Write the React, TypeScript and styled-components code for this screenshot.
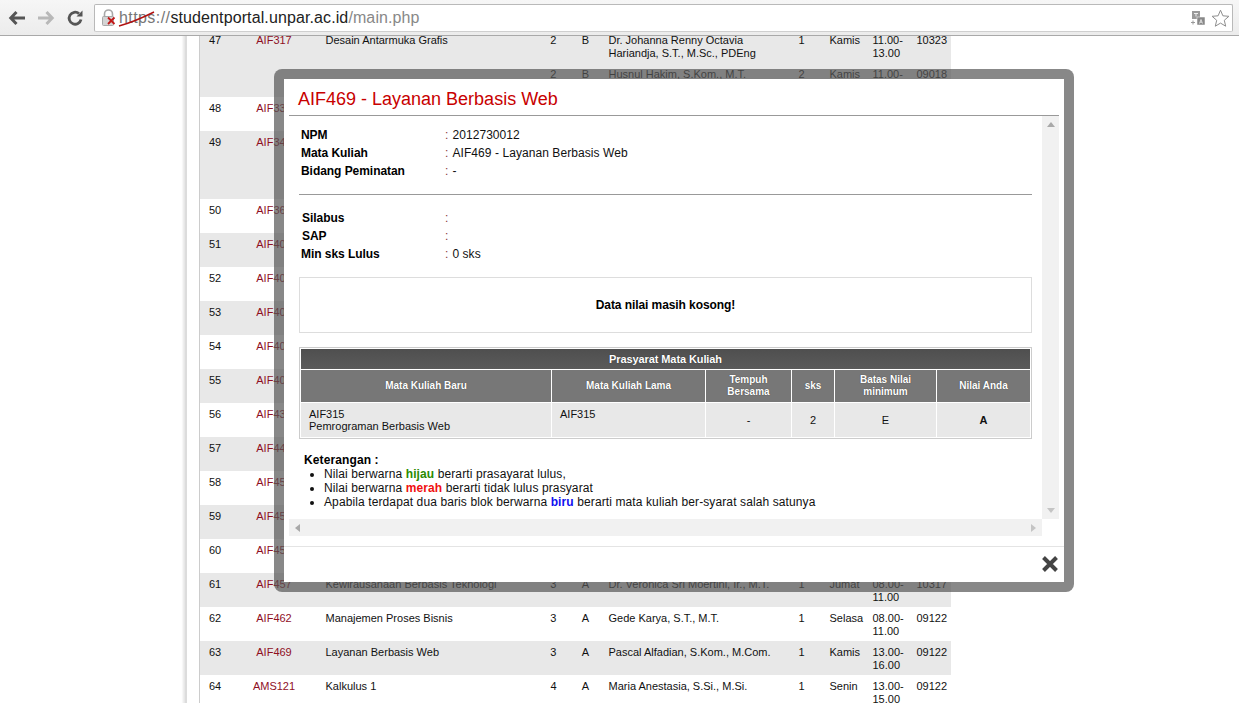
import React from 'react';
import styled, { createGlobalStyle } from 'styled-components';

const Global = createGlobalStyle`
  html, body {
    margin: 0;
    background: #fff;
    overflow: hidden;
    font-family: "Liberation Sans", Arial, sans-serif;
  }
`;

const Screen = styled.div`
  width: 1239px;
  height: 703px;
  display: flex;
  flex-direction: column;
  overflow: hidden;
`;

const Toolbar = styled.header`
  flex: none;
  height: 36px;
  display: flex;
  align-items: flex-start;
  padding: 4px 6px 0 0;
  box-sizing: border-box;
  background: linear-gradient(#f6f6f6, #ececec);
  border-bottom: 1px solid #a9a9a9;
`;

const NavIcon = styled.svg<{ $left: number }>`
  flex: none;
  width: 18px;
  height: 18px;
  margin: 5px 0 0 ${(p) => p.$left}px;
`;

const UrlBar = styled.div`
  flex: 1;
  height: 28px;
  margin-left: 10px;
  display: flex;
  align-items: center;
  box-sizing: border-box;
  background: #fff;
  border: 1px solid #b9b9b9;
  border-bottom-color: #cfcfcf;
  border-radius: 2px;
  padding: 0 2px 0 6px;
`;

const UrlText = styled.div`
  position: relative;
  margin-left: 2px;
  font-size: 16px;
  letter-spacing: 0.11px;
  color: #222;
  white-space: nowrap;
`;

const Scheme = styled.span`
  color: #777;
  letter-spacing: 0.42px;
`;

const Path = styled.span`
  color: #888;
`;

const Strike = styled.svg`
  position: absolute;
  left: -1px;
  top: -2px;
  width: 38px;
  height: 22px;
`;

const BarEnd = styled.div`
  margin-left: auto;
  display: flex;
  align-items: center;
  gap: 5px;
`;

const Content = styled.main`
  position: relative;
  flex: 1;
  min-height: 0;
  overflow: hidden;
`;

const Sheet = styled.div`
  width: 751px;
  margin-left: 185px;
  padding-left: 12px;
  border-left: 2px solid #dcdcdc;
  box-shadow: -2px 0 2px #e6e6e6;
`;

const Table = styled.table`
  width: 751px;
  margin-top: -7px;
  table-layout: fixed;
  border-collapse: collapse;
  border-left: 1px solid #ccc;
  font-size: 11px;
  line-height: 13px;
  color: #111;
`;

const Row = styled.tr<{ $shade: boolean }>`
  background: ${(p) => (p.$shade ? '#e8e8e8' : '#fff')};
`;

const Cell = styled.td<{ $center?: boolean }>`
  height: 26px;
  padding: 5px 0 3px ${(p) => (p.$center ? 0 : 9)}px;
  text-align: ${(p) => (p.$center ? 'center' : 'left')};
  vertical-align: top;
  white-space: pre-line;
`;

const CodeLink = styled.span`
  color: #8f0f1f;
`;

const Modal = styled.section`
  position: absolute;
  left: 274px;
  top: 33px;
  width: 780px;
  height: 503px;
  display: flex;
  flex-direction: column;
  background: #fff;
  background-clip: padding-box;
  border: 10px solid rgba(85, 85, 85, 0.7);
  border-radius: 8px;
`;

const ModalTitle = styled.h2`
  flex: none;
  height: 37px;
  box-sizing: border-box;
  margin: 0 5px;
  padding: 10px 9px 0;
  font-size: 18px;
  line-height: 21px;
  font-weight: normal;
  color: #c80000;
  border-bottom: 1px solid #999;
`;

const ScrollArea = styled.div`
  flex: none;
  height: 420px;
  margin: 0 5px;
  display: grid;
  grid-template-columns: 753px 17px;
  grid-template-rows: 403px 17px;
`;

const Panel = styled.div`
  padding: 10px 10px 0;
  box-sizing: border-box;
  overflow: hidden;
  font-size: 12px;
  color: #111;
`;

const InfoList = styled.div`
  display: grid;
  grid-template-columns: 144px 1fr;
  grid-auto-rows: 18px;
  line-height: 18px;
  padding-left: 2px;
`;

const InfoLabel = styled.div<{ $nudge?: boolean }>`
  font-weight: bold;
  color: #000;
  letter-spacing: -0.05px;
  padding-left: ${(p) => (p.$nudge ? 1 : 0)}px;
`;

const InfoValue = styled.div`
  letter-spacing: 0.07px;
  &::before {
    content: ':';
    color: #8a3a3a;
    margin-right: 4px;
  }
`;

const Rule = styled.hr`
  height: 1px;
  margin: 14px 0 14px;
  border: 0;
  background: #999;
`;

const EmptyBox = styled.div`
  height: 56px;
  margin-top: 14px;
  box-sizing: border-box;
  display: flex;
  align-items: center;
  justify-content: center;
  border: 1px solid #ddd;
  font-weight: bold;
  letter-spacing: -0.08px;
  color: #000;
`;

const PrereqTable = styled.table`
  width: 733px;
  margin-top: 14px;
  table-layout: fixed;
  border: 1px solid #ccc;
  border-spacing: 1px;
  border-collapse: separate;
  font-size: 11px;
  line-height: 12px;
`;

const PrereqTitle = styled.th`
  height: 20px;
  padding: 0;
  background: linear-gradient(#4f4f4f, #5a5a5a);
  color: #fff;
  font-weight: bold;
  letter-spacing: -0.1px;
  text-shadow: 0 0 1px #222;
`;

const PrereqHead = styled.th`
  height: 32px;
  padding: 0;
  background: #777;
  color: #fff;
  font-size: 10px;
  font-weight: bold;
  text-shadow: 0 0 1px #333;
`;

const PrereqCell = styled.td<{ $text?: boolean; $strong?: boolean }>`
  height: 24px;
  padding: 5px ${(p) => (p.$text ? '8px' : '0')};
  background: #e8e8e8;
  color: #111;
  text-align: ${(p) => (p.$text ? 'left' : 'center')};
  vertical-align: ${(p) => (p.$text ? 'top' : 'middle')};
  font-weight: ${(p) => (p.$strong ? 'bold' : 'normal')};
`;

const Notes = styled.div`
  margin: 14px 0 0 5px;
  line-height: 14px;
  letter-spacing: 0.11px;
`;

const NotesTitle = styled.div`
  font-weight: bold;
  color: #000;
`;

const NotesList = styled.ul`
  margin: 0;
  padding-left: 20px;
`;

const Tone = styled.b<{ $color: string }>`
  color: ${(p) => p.$color};
`;

const ScrollTrack = styled.div<{ $vertical?: boolean }>`
  display: flex;
  flex-direction: ${(p) => (p.$vertical ? 'column' : 'row')};
  align-items: center;
  justify-content: space-between;
  padding: ${(p) => (p.$vertical ? '6px 0' : '0 6px')};
  box-sizing: border-box;
  background: #f1f1f1;
`;

const Arrow = styled.i<{ $dir: 'up' | 'down' | 'left' | 'right' }>`
  display: block;
  width: 0;
  height: 0;
  border: 4px solid transparent;
  ${(p) =>
    p.$dir === 'up'
      ? 'border-top: 0; border-bottom: 5px solid #a9a9a9;'
      : p.$dir === 'down'
        ? 'border-bottom: 0; border-top: 5px solid #c4c4c4;'
        : p.$dir === 'left'
          ? 'border-left: 0; border-right: 5px solid #a9a9a9;'
          : 'border-right: 0; border-left: 5px solid #c4c4c4;'}
`;

const Footer = styled.footer`
  flex: none;
  margin-top: 10px;
  height: 36px;
  box-sizing: border-box;
  display: flex;
  justify-content: flex-end;
  padding: 8px 5px 0 0;
  border-top: 1px solid #e4e4e4;
`;

const CloseIcon = styled.svg`
  width: 18px;
  height: 18px;
`;

type Course = {
  no: number;
  code: string;
  name: string;
  sks: string;
  cls: string;
  lecturer: string;
  credit: string;
  day: string;
  time: string;
  room: string;
  span?: boolean;
};

const courses: Course[] = [
  { no: 48, code: 'AIF331', name: 'Pemodelan Sistem', sks: '3', cls: 'A', lecturer: 'Husnul Hakim, S.Kom., M.T.', credit: '1', day: 'Senin', time: '08.00-\n11.00', room: '09018' },
  { no: 49, code: 'AIF342', name: 'Analisis Sistem', sks: '3', cls: 'A', lecturer: 'Gede Karya, S.T., M.T.', credit: '1', day: 'Rabu', time: '08.00-\n11.00', room: '09122', span: true },
  { no: 50, code: 'AIF361', name: 'Jaringan Komputer', sks: '3', cls: 'A', lecturer: 'Pascal Alfadian, S.Kom.', credit: '1', day: 'Senin', time: '13.00-\n16.00', room: '09122' },
  { no: 51, code: 'AIF401', name: 'Kecerdasan Buatan', sks: '3', cls: 'A', lecturer: 'Gede Karya, S.T., M.T.', credit: '1', day: 'Selasa', time: '13.00-\n16.00', room: '09122' },
  { no: 52, code: 'AIF402', name: 'Grafika Komputer', sks: '3', cls: 'A', lecturer: 'Pascal Alfadian, S.Kom.', credit: '1', day: 'Rabu', time: '13.00-\n16.00', room: '09122' },
  { no: 53, code: 'AIF403', name: 'Sistem Terdistribusi', sks: '3', cls: 'A', lecturer: 'Husnul Hakim, S.Kom., M.T.', credit: '1', day: 'Kamis', time: '08.00-\n11.00', room: '09018' },
  { no: 54, code: 'AIF404', name: 'Keamanan Informasi', sks: '3', cls: 'A', lecturer: 'Gede Karya, S.T., M.T.', credit: '1', day: 'Jumat', time: '08.00-\n11.00', room: '09122' },
  { no: 55, code: 'AIF405', name: 'Basis Data Lanjut', sks: '3', cls: 'A', lecturer: 'Pascal Alfadian, S.Kom.', credit: '1', day: 'Senin', time: '08.00-\n11.00', room: '09122' },
  { no: 56, code: 'AIF431', name: 'Rekayasa Perangkat Lunak', sks: '3', cls: 'A', lecturer: 'Husnul Hakim, S.Kom., M.T.', credit: '1', day: 'Selasa', time: '08.00-\n11.00', room: '09018' },
  { no: 57, code: 'AIF441', name: 'Komputasi Awan', sks: '3', cls: 'A', lecturer: 'Gede Karya, S.T., M.T.', credit: '1', day: 'Rabu', time: '08.00-\n11.00', room: '09122' },
  { no: 58, code: 'AIF451', name: 'Pemrograman Mobile', sks: '3', cls: 'A', lecturer: 'Pascal Alfadian, S.Kom.', credit: '1', day: 'Kamis', time: '08.00-\n11.00', room: '09122' },
  { no: 59, code: 'AIF452', name: 'Data Mining', sks: '3', cls: 'A', lecturer: 'Husnul Hakim, S.Kom., M.T.', credit: '1', day: 'Jumat', time: '13.00-\n16.00', room: '09018' },
  { no: 60, code: 'AIF455', name: 'Topik Khusus', sks: '3', cls: 'A', lecturer: 'Gede Karya, S.T., M.T.', credit: '1', day: 'Senin', time: '13.00-\n16.00', room: '09122' },
  { no: 61, code: 'AIF457', name: 'Kewirausahaan Berbasis Teknologi', sks: '3', cls: 'A', lecturer: 'Dr. Veronica Sri Moertini, Ir., M.T.', credit: '1', day: 'Jumat', time: '08.00-\n11.00', room: '10317' },
  { no: 62, code: 'AIF462', name: 'Manajemen Proses Bisnis', sks: '3', cls: 'A', lecturer: 'Gede Karya, S.T., M.T.', credit: '1', day: 'Selasa', time: '08.00-\n11.00', room: '09122' },
  { no: 63, code: 'AIF469', name: 'Layanan Berbasis Web', sks: '3', cls: 'A', lecturer: 'Pascal Alfadian, S.Kom., M.Com.', credit: '1', day: 'Kamis', time: '13.00-\n16.00', room: '09122' },
  { no: 64, code: 'AMS121', name: 'Kalkulus 1', sks: '4', cls: 'A', lecturer: 'Maria Anestasia, S.Si., M.Si.', credit: '1', day: 'Senin', time: '13.00-\n15.00', room: '09122' },
];

const columnWidths = [32, 85, 219, 36, 28, 183, 38, 43, 44, 43];
const prereqWidths = [250, 153, 85, 42, 101, 93];

const CourseCells = ({ c }: { c: Course }) => (
  <>
    <Cell $center>{c.sks}</Cell>
    <Cell $center>{c.cls}</Cell>
    <Cell>{c.lecturer}</Cell>
    <Cell $center>{c.credit}</Cell>
    <Cell>{c.day}</Cell>
    <Cell>{c.time}</Cell>
    <Cell>{c.room}</Cell>
  </>
);

const CourseRow = ({ c }: { c: Course }) => {
  const shade = c.no % 2 === 1;
  const span = c.span ? 2 : 1;
  return (
    <>
      <Row $shade={shade}>
        <Cell rowSpan={span}>{c.no}</Cell>
        <Cell $center rowSpan={span}>
          <CodeLink>{c.code}</CodeLink>
        </Cell>
        <Cell rowSpan={span}>{c.name}</Cell>
        <CourseCells c={c} />
      </Row>
      {c.span && (
        <Row $shade={shade}>
          <CourseCells c={{ ...c, day: 'Kamis' }} />
        </Row>
      )}
    </>
  );
};

const BackIcon = () => (
  <NavIcon $left={8} viewBox="0 0 18 18">
    <path d="M8.5 3 2.8 9l5.7 6M3.5 9H17" fill="none" stroke="#555" strokeWidth="3" />
  </NavIcon>
);

const ForwardIcon = () => (
  <NavIcon $left={11} viewBox="0 0 18 18">
    <path d="M9.5 3l5.7 6-5.7 6M14.5 9H1" fill="none" stroke="#b8b8b8" strokeWidth="3" />
  </NavIcon>
);

const ReloadIcon = () => (
  <NavIcon $left={11} viewBox="0 0 18 18">
    <path d="M15 10.5A6 6 0 1 1 13 4.6" fill="none" stroke="#555" strokeWidth="2.8" />
    <path d="M10.5 7.5H16.5V1.5z" fill="#555" />
  </NavIcon>
);

const BrokenLock = () => (
  <svg width="16" height="18" viewBox="0 0 16 18">
    <path d="M3.5 8V5a4 4 0 0 1 8 0v3" fill="none" stroke="#a8a8a8" strokeWidth="1.6" />
    <rect x="1.5" y="7.5" width="11" height="9" rx="1" fill="#d4d4d4" stroke="#a8a8a8" />
    <path d="M7 8.5l6.5 6.5M13.5 8.5L7 15" stroke="#c21818" strokeWidth="1.8" />
  </svg>
);

const TranslateIcon = () => (
  <svg width="15" height="15" viewBox="0 0 15 15">
    <rect x="1" y="0" width="8" height="8" fill="#999" />
    <rect x="6" y="6" width="8" height="8" fill="#888" stroke="#fff" strokeWidth="0.5" />
    <path d="M3 2.5h4M5 2.5v3" stroke="#eee" strokeWidth="1" fill="none" />
    <path d="M8.5 12.5l1.5-4 1.5 4M9 11.2h2" stroke="#eee" strokeWidth="0.8" fill="none" />
    <path d="M0 11.5h4M2 9.5v4" stroke="#999" strokeWidth="1" />
  </svg>
);

const StarIcon = () => (
  <svg width="19" height="19" viewBox="0 0 19 19">
    <path
      d="M9.5 1.2l2.4 5.6 6 .5-4.6 4 1.4 5.9-5.2-3.1-5.2 3.1 1.4-5.9-4.6-4 6-.5z"
      fill="#fff"
      stroke="#8e8e8e"
      strokeWidth="1"
    />
  </svg>
);

export default function App() {
  const first = { sks: '2', cls: 'B', credit: '1', day: 'Kamis', room: '10323' };
  return (
    <Screen>
      <Global />
      <Toolbar>
        <BackIcon />
        <ForwardIcon />
        <ReloadIcon />
        <UrlBar>
          <BrokenLock />
          <UrlText>
            <Scheme>https://</Scheme>
            studentportal.unpar.ac.id
            <Path>/main.php</Path>
            <Strike viewBox="0 0 38 22">
              <path d="M1 19C12 16 26 10 36 5" fill="none" stroke="#b01010" strokeWidth="1.4" />
            </Strike>
          </UrlText>
          <BarEnd>
            <TranslateIcon />
            <StarIcon />
          </BarEnd>
        </UrlBar>
      </Toolbar>

      <Content>
        <Sheet>
          <Table>
            <colgroup>
              {columnWidths.map((w, i) => (
                <col key={i} width={w} />
              ))}
            </colgroup>
            <tbody>
              <Row $shade>
                <Cell rowSpan={2}>47</Cell>
                <Cell $center rowSpan={2}>
                  <CodeLink>AIF317</CodeLink>
                </Cell>
                <Cell rowSpan={2}>Desain Antarmuka Grafis</Cell>
                <Cell $center>{first.sks}</Cell>
                <Cell $center>{first.cls}</Cell>
                <Cell>Dr. Johanna Renny Octavia{'\n'}Hariandja, S.T., M.Sc., PDEng</Cell>
                <Cell $center>{first.credit}</Cell>
                <Cell>{first.day}</Cell>
                <Cell>11.00-{'\n'}13.00</Cell>
                <Cell>{first.room}</Cell>
              </Row>
              <Row $shade>
                <Cell $center>2</Cell>
                <Cell $center>B</Cell>
                <Cell>Husnul Hakim, S.Kom., M.T.</Cell>
                <Cell $center>2</Cell>
                <Cell>Kamis</Cell>
                <Cell>11.00-{'\n'}13.00</Cell>
                <Cell>09018</Cell>
              </Row>
              {courses.map((c) => (
                <CourseRow key={c.no} c={c} />
              ))}
            </tbody>
          </Table>
        </Sheet>

        <Modal>
          <ModalTitle>AIF469 - Layanan Berbasis Web</ModalTitle>
          <ScrollArea>
            <Panel>
              <InfoList>
                <InfoLabel>NPM</InfoLabel>
                <InfoValue>2012730012</InfoValue>
                <InfoLabel>Mata Kuliah</InfoLabel>
                <InfoValue>AIF469 - Layanan Berbasis Web</InfoValue>
                <InfoLabel>Bidang Peminatan</InfoLabel>
                <InfoValue>-</InfoValue>
              </InfoList>
              <Rule />
              <InfoList>
                <InfoLabel $nudge>Silabus</InfoLabel>
                <InfoValue />
                <InfoLabel $nudge>SAP</InfoLabel>
                <InfoValue />
                <InfoLabel>Min sks Lulus</InfoLabel>
                <InfoValue>0 sks</InfoValue>
              </InfoList>
              <EmptyBox>Data nilai masih kosong!</EmptyBox>
              <PrereqTable>
                <colgroup>
                  {prereqWidths.map((w, i) => (
                    <col key={i} width={w} />
                  ))}
                </colgroup>
                <thead>
                  <tr>
                    <PrereqTitle colSpan={6}>Prasyarat Mata Kuliah</PrereqTitle>
                  </tr>
                  <tr>
                    <PrereqHead>Mata Kuliah Baru</PrereqHead>
                    <PrereqHead>Mata Kuliah Lama</PrereqHead>
                    <PrereqHead>
                      Tempuh
                      <br />
                      Bersama
                    </PrereqHead>
                    <PrereqHead>sks</PrereqHead>
                    <PrereqHead>
                      Batas Nilai
                      <br />
                      minimum
                    </PrereqHead>
                    <PrereqHead>Nilai Anda</PrereqHead>
                  </tr>
                </thead>
                <tbody>
                  <tr>
                    <PrereqCell $text>
                      AIF315
                      <br />
                      Pemrograman Berbasis Web
                    </PrereqCell>
                    <PrereqCell $text>AIF315</PrereqCell>
                    <PrereqCell>-</PrereqCell>
                    <PrereqCell>2</PrereqCell>
                    <PrereqCell>E</PrereqCell>
                    <PrereqCell $strong>A</PrereqCell>
                  </tr>
                </tbody>
              </PrereqTable>
              <Notes>
                <NotesTitle>Keterangan :</NotesTitle>
                <NotesList>
                  <li>
                    Nilai berwarna <Tone $color="#2a8a00">hijau</Tone> berarti prasayarat lulus,
                  </li>
                  <li>
                    Nilai berwarna <Tone $color="#f01010">merah</Tone> berarti tidak lulus prasyarat
                  </li>
                  <li>
                    Apabila terdapat dua baris blok berwarna <Tone $color="#1010f0">biru</Tone> berarti
                    mata kuliah ber-syarat salah satunya
                  </li>
                </NotesList>
              </Notes>
            </Panel>
            <ScrollTrack $vertical>
              <Arrow $dir="up" />
              <Arrow $dir="down" />
            </ScrollTrack>
            <ScrollTrack>
              <Arrow $dir="left" />
              <Arrow $dir="right" />
            </ScrollTrack>
          </ScrollArea>
          <Footer>
            <CloseIcon viewBox="0 0 18 18">
              <path d="M2.5 2.5l13 13M15.5 2.5l-13 13" stroke="#444" strokeWidth="4" />
            </CloseIcon>
          </Footer>
        </Modal>
      </Content>
    </Screen>
  );
}
